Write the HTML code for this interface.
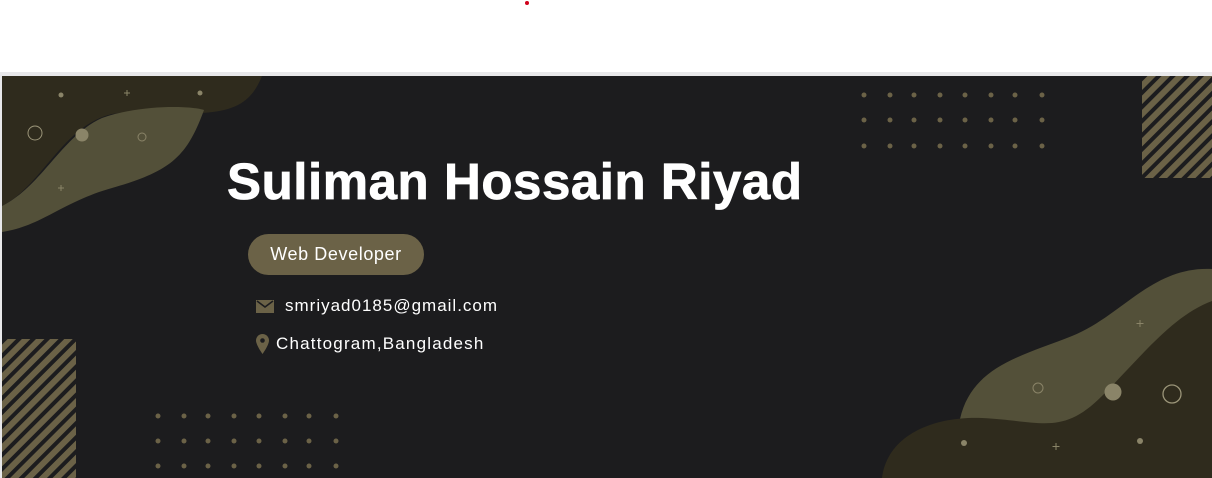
<!DOCTYPE html>
<html><head><meta charset="utf-8"><style>
*{margin:0;padding:0;box-sizing:border-box}
body{width:1212px;height:478px;background:#fff;overflow:hidden;position:relative;font-family:"Liberation Sans",sans-serif}
.top{position:absolute;left:0;top:72px;width:1212px;height:4px;background:#e8e8ea}
.ban{position:absolute;left:2px;top:76px;width:1210px;height:402px;background:#1c1c1e;overflow:hidden}
.t{position:absolute;color:#fff;white-space:nowrap}
</style></head><body>
<div style="position:absolute;left:525px;top:1px;width:4px;height:4px;border-radius:50%;background:#d0021b"></div>
<div class="top"></div>
<div style="position:absolute;left:0;top:72px;width:2px;height:406px;background:#e8e8ea"></div>
<div class="ban">
<svg width="1210" height="402" style="position:absolute;left:0;top:0">
<defs>
<pattern id="st" width="10" height="10" patternUnits="userSpaceOnUse" patternTransform="rotate(45)">
<rect width="6" height="10" fill="#6b6247"/></pattern>
</defs>
<path d="M0 0 H260 C250 25 235 35 200 37 C190 35 150 32 110 38 C60 50 40 110 0 130 Z" fill="#2f2b1d"/>
<path d="M0 130 C40 110 60 60 100 42 C140 28 190 30 202 34 C185 80 170 95 110 112 C60 126 40 150 0 156 Z" fill="#535039"/>
<circle cx="33" cy="57" r="7" fill="none" stroke="#9a9478" stroke-width="1"/>
<circle cx="80" cy="59" r="6.5" fill="#8a8468"/>
<circle cx="140" cy="61" r="4" fill="none" stroke="#8a8468" stroke-width="1"/>
<circle cx="59" cy="19" r="2.5" fill="#8a8468"/><circle cx="198" cy="17" r="2.5" fill="#8a8468"/>
<path d="M125 14v6M122 17h6M59 109v6M56 112h6" stroke="#8a8468" stroke-width="1"/>
<path d="M958 343 C970 290 1020 280 1070 260 C1120 240 1150 190 1210 193 V402 H958 Z" fill="#535039"/>
<path d="M880 402 C885 360 930 340 980 342 C1040 345 1060 360 1100 320 C1140 280 1170 240 1210 225 V402 Z" fill="#2f2b1d"/>
<circle cx="1036" cy="312" r="5" fill="none" stroke="#8a8468" stroke-width="1"/>
<circle cx="1111" cy="316" r="8.5" fill="#8a8468"/>
<circle cx="1170" cy="318" r="9" fill="none" stroke="#9a9478" stroke-width="1.3"/>
<circle cx="962" cy="367" r="3" fill="#8a8468"/><circle cx="1138" cy="365" r="3" fill="#8a8468"/>
<path d="M1138 244v7M1134.5 247.5h7M1054 367v7M1050.5 370.5h7" stroke="#8a8468" stroke-width="1"/>
<rect x="1140" y="0" width="70" height="102" fill="url(#st)"/>
<rect x="0" y="263" width="74" height="139" fill="url(#st)"/>
<g fill="#6b6247">
<g id="r1"><circle cx="862" cy="19" r="2.5"/><circle cx="888" cy="19" r="2.5"/><circle cx="912" cy="19" r="2.5"/><circle cx="938" cy="19" r="2.5"/><circle cx="963" cy="19" r="2.5"/><circle cx="989" cy="19" r="2.5"/><circle cx="1013" cy="19" r="2.5"/><circle cx="1040" cy="19" r="2.5"/></g>
<use href="#r1" y="25"/><use href="#r1" y="51"/>
<use href="#r1" x="-706" y="321"/><use href="#r1" x="-706" y="346"/><use href="#r1" x="-706" y="371"/>
</g>
</svg>
<div class="t" style="left:225px;top:76px;font-size:51px;font-weight:bold;letter-spacing:0.55px;-webkit-text-stroke:0.8px #fff">Suliman Hossain Riyad</div>
<div style="position:absolute;left:246px;top:158px;width:176px;height:41px;border-radius:21px;background:#6b6247;color:#fff;font-size:18px;line-height:41px;text-align:center;letter-spacing:0.6px">Web Developer</div>
<svg style="position:absolute;left:254px;top:224px" width="18" height="13"><rect width="18" height="13" fill="#6b6247"/><path d="M1 1 L9 7 L17 1" stroke="#1c1c1e" stroke-width="1.6" fill="none"/></svg>
<div class="t" style="left:283px;top:220px;font-size:17px;letter-spacing:1px">smriyad0185@gmail.com</div>
<svg style="position:absolute;left:254px;top:258px" width="13" height="20" viewBox="0 0 13 20"><path d="M6.5 0C2.9 0 0 2.9 0 6.5 0 11 6.5 20 6.5 20S13 11 13 6.5C13 2.9 10.1 0 6.5 0Z" fill="#6b6247"/><circle cx="6.5" cy="6.5" r="2.3" fill="#1c1c1e"/></svg>
<div class="t" style="left:274px;top:258px;font-size:17px;letter-spacing:1.2px">Chattogram,Bangladesh</div>
</div>
</body></html>
